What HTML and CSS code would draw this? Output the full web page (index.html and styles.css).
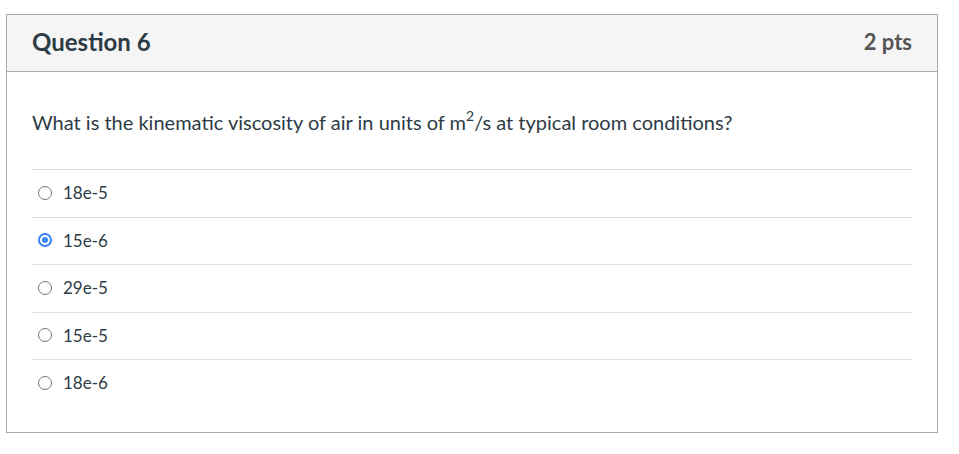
FILE: index.html
```html
<!DOCTYPE html>
<html>
<head>
<meta charset="utf-8">
<link rel="stylesheet" href="styles.css">
</head>
<body>
<div class="question">
  <div class="header">
    <span class="name">Question 6</span>
    <span class="pts">2 pts</span>
  </div>
  <div class="content">
    <div class="text">What is the kinematic viscosity of air in units of m<sup>2</sup>/s at typical room conditions?</div>
    <div class="answers">
      <label class="answer"><span class="radio"></span><span class="label">18e-5</span></label>
      <label class="answer"><span class="radio checked"></span><span class="label">15e-6</span></label>
      <label class="answer"><span class="radio"></span><span class="label">29e-5</span></label>
      <label class="answer"><span class="radio"></span><span class="label">15e-5</span></label>
      <label class="answer"><span class="radio"></span><span class="label">18e-6</span></label>
    </div>
  </div>
</div>
</body>
</html>
```
FILE: styles.css
```css
html, body {
  margin: 0;
  padding: 0;
  background: #ffffff;
}
body {
  padding: 14px 21px 0 6px;
  font-family: Lato, "Liberation Sans", sans-serif;
  color: #2d3b45;
}
.question {
  border: 1px solid #aaaaaa;
  box-sizing: border-box;
  width: 932px;
}
.header {
  display: flex;
  justify-content: space-between;
  align-items: center;
  background: #f5f5f5;
  border-bottom: 1px solid #aaaaaa;
  height: 57px;
  padding: 0 25px 3px 25px;
  box-sizing: border-box;
}
.name {
  font-weight: 700;
  font-size: 24px;
  line-height: 28px;
  color: #2d3b45;
}
.pts {
  font-weight: 700;
  font-size: 22px;
  line-height: 28px;
  color: #555555;
}
.content {
  padding: 36px 25px 25px 25px;
}
.text {
  font-size: 20px;
  line-height: 28px;
  margin-bottom: 33px;
}
.text sup {
  font-size: 14px;
  line-height: 0;
  vertical-align: 9px;
}
.answers {
  display: flex;
  flex-direction: column;
}
.answer {
  display: flex;
  align-items: center;
  border-top: 1px solid #dddddd;
  height: 47.5px;
  padding-bottom: 1px;
  box-sizing: border-box;
  font-size: 17px;
}
.radio {
  width: 14px;
  height: 14px;
  border: 1px solid #767676;
  border-radius: 50%;
  box-sizing: border-box;
  margin-left: 6px;
  margin-right: 11px;
  position: relative;
}
.radio.checked {
  border: 2px solid #3b82f6;
}
.radio.checked::after {
  content: "";
  position: absolute;
  left: 2px;
  top: 2px;
  width: 6px;
  height: 6px;
  border-radius: 50%;
  background: #3b82f6;
}
.label {
  color: #2d3b45;
}
```
